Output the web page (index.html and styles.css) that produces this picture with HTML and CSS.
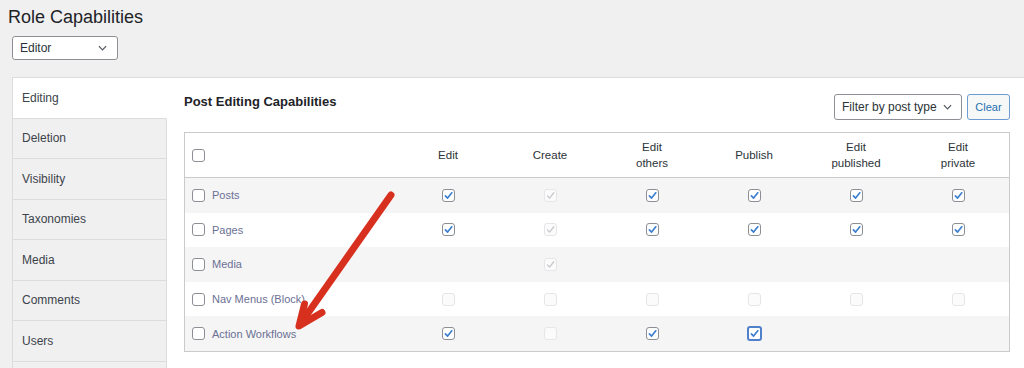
FILE: index.html
```html
<!DOCTYPE html>
<html lang="en">
<head>
<meta charset="utf-8">
<title>Role Capabilities</title>
<link rel="stylesheet" href="styles.css">
</head>
<body>
<div class="wrap">
  <h1 class="title">Role Capabilities</h1>
  <div class="select role-select"><span>Editor</span><svg class="chev" viewBox="0 0 10 6"><path d="M1 1l4 4 4-4"/></svg></div>
  <div class="panel">
    <nav class="sidebar">
      <div class="tab active">Editing</div>
      <div class="tab">Deletion</div>
      <div class="tab">Visibility</div>
      <div class="tab">Taxonomies</div>
      <div class="tab">Media</div>
      <div class="tab">Comments</div>
      <div class="tab">Users</div>
      <div class="tab"></div>
    </nav>
    <section class="content">
      <div class="content-head">
        <h2 class="section-title">Post Editing Capabilities</h2>
        <div class="filters">
          <div class="select filter-select"><span>Filter by post type</span><svg class="chev" viewBox="0 0 10 6"><path d="M1 1l4 4 4-4"/></svg></div>
          <button class="btn-clear">Clear</button>
        </div>
      </div>
      <div class="caps">
        <div class="row head">
          <div class="cell first"><span class="cb"></span></div>
          <div class="cell">Edit</div>
          <div class="cell">Create</div>
          <div class="cell">Edit<br>others</div>
          <div class="cell">Publish</div>
          <div class="cell">Edit<br>published</div>
          <div class="cell">Edit<br>private</div>
        </div>
        <div class="row alt">
          <div class="cell first"><span class="cb"></span><span class="label">Posts</span></div>
          <div class="cell"><span class="cb"><svg viewBox="0 0 12 12"><path d="M2.6 6.4L5 8.8 9.6 3"/></svg></span></div>
          <div class="cell"><span class="cb off"><svg viewBox="0 0 12 12"><path d="M2.6 6.4L5 8.8 9.6 3"/></svg></span></div>
          <div class="cell"><span class="cb"><svg viewBox="0 0 12 12"><path d="M2.6 6.4L5 8.8 9.6 3"/></svg></span></div>
          <div class="cell"><span class="cb"><svg viewBox="0 0 12 12"><path d="M2.6 6.4L5 8.8 9.6 3"/></svg></span></div>
          <div class="cell"><span class="cb"><svg viewBox="0 0 12 12"><path d="M2.6 6.4L5 8.8 9.6 3"/></svg></span></div>
          <div class="cell"><span class="cb"><svg viewBox="0 0 12 12"><path d="M2.6 6.4L5 8.8 9.6 3"/></svg></span></div>
        </div>
        <div class="row">
          <div class="cell first"><span class="cb"></span><span class="label">Pages</span></div>
          <div class="cell"><span class="cb"><svg viewBox="0 0 12 12"><path d="M2.6 6.4L5 8.8 9.6 3"/></svg></span></div>
          <div class="cell"><span class="cb off"><svg viewBox="0 0 12 12"><path d="M2.6 6.4L5 8.8 9.6 3"/></svg></span></div>
          <div class="cell"><span class="cb"><svg viewBox="0 0 12 12"><path d="M2.6 6.4L5 8.8 9.6 3"/></svg></span></div>
          <div class="cell"><span class="cb"><svg viewBox="0 0 12 12"><path d="M2.6 6.4L5 8.8 9.6 3"/></svg></span></div>
          <div class="cell"><span class="cb"><svg viewBox="0 0 12 12"><path d="M2.6 6.4L5 8.8 9.6 3"/></svg></span></div>
          <div class="cell"><span class="cb"><svg viewBox="0 0 12 12"><path d="M2.6 6.4L5 8.8 9.6 3"/></svg></span></div>
        </div>
        <div class="row alt">
          <div class="cell first"><span class="cb"></span><span class="label">Media</span></div>
          <div class="cell"></div>
          <div class="cell"><span class="cb off"><svg viewBox="0 0 12 12"><path d="M2.6 6.4L5 8.8 9.6 3"/></svg></span></div>
          <div class="cell"></div>
          <div class="cell"></div>
          <div class="cell"></div>
          <div class="cell"></div>
        </div>
        <div class="row">
          <div class="cell first"><span class="cb"></span><span class="label">Nav Menus (Block)</span></div>
          <div class="cell"><span class="cb off"></span></div>
          <div class="cell"><span class="cb off"></span></div>
          <div class="cell"><span class="cb off"></span></div>
          <div class="cell"><span class="cb off"></span></div>
          <div class="cell"><span class="cb off"></span></div>
          <div class="cell"><span class="cb off"></span></div>
        </div>
        <div class="row alt">
          <div class="cell first"><span class="cb"></span><span class="label">Action Workflows</span></div>
          <div class="cell"><span class="cb"><svg viewBox="0 0 12 12"><path d="M2.6 6.4L5 8.8 9.6 3"/></svg></span></div>
          <div class="cell"><span class="cb off"></span></div>
          <div class="cell"><span class="cb"><svg viewBox="0 0 12 12"><path d="M2.6 6.4L5 8.8 9.6 3"/></svg></span></div>
          <div class="cell"><span class="cb focus"><svg viewBox="0 0 12 12"><path d="M2.6 6.4L5 8.8 9.6 3"/></svg></span></div>
          <div class="cell"></div>
          <div class="cell"></div>
        </div>
      </div>
    </section>
  </div>
</div>
<svg class="arrow" viewBox="0 0 1024 368" width="1024" height="368">
  <path class="shaft" d="M391 195L301 323"/>
  <path class="head" d="M304.5 304L299 326 322 312.5"/>
</svg>
</body>
</html>
```
FILE: styles.css
```css
html, body {
  margin: 0;
  height: 368px;
  overflow: hidden;
  background: #f0f0f1;
}
body {
  position: relative;
  font-family: "Liberation Sans", Arial, sans-serif;
  color: #2c3338;
}
.wrap {
  padding: 6px 0 0 8px;
}
.title {
  margin: 0;
  font-size: 18px;
  line-height: 22px;
  font-weight: 400;
  color: #1d2327;
}
.select {
  box-sizing: border-box;
  display: flex;
  align-items: center;
  justify-content: space-between;
  background: #fff;
  border: 1px solid #8c8f94;
  border-radius: 3px;
  font-size: 12px;
  color: #2c3338;
}
.chev {
  width: 9px;
  height: 6px;
}
.chev path {
  fill: none;
  stroke: #50575e;
  stroke-width: 1.3;
}
.role-select {
  margin: 8px 0 0 4px;
  width: 106px;
  height: 24px;
  padding: 0 10px 0 7px;
}
.panel {
  margin: 17px 0 0 4px;
  width: 1040px;
  display: flex;
  background: #fff;
  border-top: 1px solid #dcdcde;
  border-left: 1px solid #dcdcde;
}
.sidebar {
  width: 154px;
  flex: none;
  display: flex;
  flex-direction: column;
}
.tab {
  box-sizing: border-box;
  height: 40.5px;
  display: flex;
  align-items: center;
  padding-left: 9px;
  font-size: 12px;
  color: #3c434a;
  background: #f0f0f1;
  border-bottom: 1px solid #dcdcde;
  border-right: 1px solid #dcdcde;
}
.tab.active {
  background: #fff;
  border-right-color: #fff;
}
.content {
  flex: none;
  width: 826px;
  padding: 16px 0 0 17px;
}
.content-head {
  display: flex;
  justify-content: space-between;
  align-items: flex-start;
}
.section-title {
  margin: 0;
  font-size: 13px;
  line-height: 15px;
  font-weight: 700;
  color: #1d2327;
}
.filters {
  display: flex;
  gap: 5px;
}
.filter-select {
  width: 128px;
  height: 26px;
  padding: 0 9px 0 7px;
}
.btn-clear {
  box-sizing: border-box;
  width: 43px;
  height: 26px;
  padding: 0;
  background: #f6f7f7;
  border: 1px solid #6f9bd3;
  border-radius: 3px;
  color: #2271b1;
  font-family: inherit;
  font-size: 11px;
}
.caps {
  margin-top: 12px;
  border: 1px solid #c9cacc;
}
.row {
  display: grid;
  grid-template-columns: 212px repeat(6, 1fr);
  height: 34.6px;
  align-items: center;
  background: #fff;
}
.row.alt {
  background: #f5f5f6;
}
.row.head {
  box-sizing: border-box;
  height: 45px;
  border-bottom: 1px solid #c9cacc;
  font-size: 11.5px;
  line-height: 16.5px;
  color: #2c3338;
}
.cell {
  display: flex;
  justify-content: center;
  align-items: center;
  text-align: center;
}
.cell.first {
  justify-content: flex-start;
  padding-left: 7px;
  gap: 7px;
}
.label {
  font-size: 11px;
  color: #6b7094;
  white-space: nowrap;
}
.cb {
  box-sizing: border-box;
  width: 13px;
  height: 13px;
  flex: none;
  display: inline-flex;
  align-items: center;
  justify-content: center;
  background: #fff;
  border: 1px solid #8c8f94;
  border-radius: 3px;
}
.cb svg {
  width: 11px;
  height: 11px;
}
.cb svg path {
  fill: none;
  stroke: #3c7fd0;
  stroke-width: 1.8;
  stroke-linecap: round;
  stroke-linejoin: round;
}
.cb.off {
  border-color: #e6e6e8;
  background: #fbfbfb;
}
.cb.off svg path {
  stroke: #c6c8cc;
  stroke-width: 1.4;
}
.cb.focus {
  width: 15px;
  height: 15px;
  border: 2px solid #4f80c9;
}
.arrow {
  position: absolute;
  top: 0;
  left: 0;
  pointer-events: none;
}
.arrow path {
  fill: none;
  stroke: #d8301f;
  stroke-width: 7;
  stroke-linecap: round;
  stroke-linejoin: round;
}
```
